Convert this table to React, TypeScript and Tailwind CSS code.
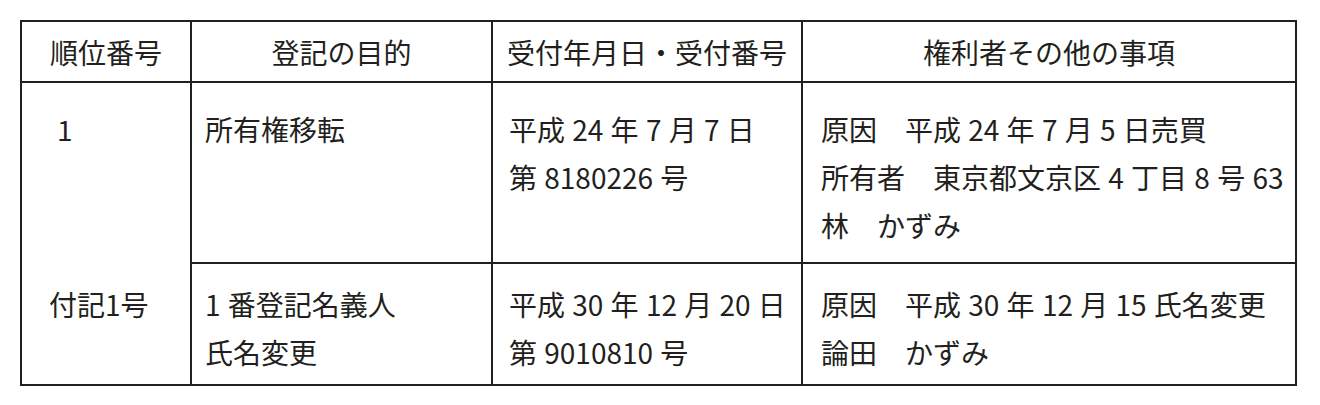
const header = ["順位番号", "登記の目的", "受付年月日・受付番号", "権利者その他の事項"];

export default function App() {
  return (
    <div className="min-h-[405px] w-[1320px] bg-white pt-[20px] pl-[20px] font-['Noto_Sans_CJK_JP',sans-serif] text-[28px] leading-[48px] text-[#231f20] [word-spacing:1px]">
      <div className="grid w-[1277px] grid-cols-[170px_301px_310px_492px] grid-rows-[61px_181px_120px] border-2 border-[#231f20]">
        {/* Header */}
        {header.map((h, i) => (
          <div
            key={h}
            className={`flex items-center justify-center border-b-2 border-[#231f20] ${
              i < 3 ? "border-r-2" : ""
            }`}
          >
            {h}
          </div>
        ))}

        {/* Row 1 */}
        <div className="border-r-2 border-[#231f20] pt-[22px] pl-[35px]">1</div>
        <div className="border-r-2 border-b-2 border-[#231f20] pt-[22px] pl-[13px]">所有権移転</div>
        <div className="border-r-2 border-b-2 border-[#231f20] pt-[22px] pl-[16px]">
          <p>平成 24 年 7 月 7 日</p>
          <p>第 8180226 号</p>
        </div>
        <div className="border-b-2 border-[#231f20] pt-[22px] pl-[18px]">
          <p>原因　平成 24 年 7 月 5 日売買</p>
          <p>所有者　東京都文京区 4 丁目 8 号 63</p>
          <p>林　かずみ</p>
        </div>

        {/* Row 2 (付記) */}
        <div className="border-r-2 border-[#231f20] pt-[16px] pl-[27px]">付記1号</div>
        <div className="border-r-2 border-[#231f20] pt-[16px] pl-[13px]">
          <p>1 番登記名義人</p>
          <p>氏名変更</p>
        </div>
        <div className="border-r-2 border-[#231f20] pt-[16px] pl-[16px]">
          <p>平成 30 年 12 月 20 日</p>
          <p>第 9010810 号</p>
        </div>
        <div className="pt-[16px] pl-[18px]">
          <p>原因　平成 30 年 12 月 15 氏名変更</p>
          <p>論田　かずみ</p>
        </div>
      </div>
    </div>
  );
}
